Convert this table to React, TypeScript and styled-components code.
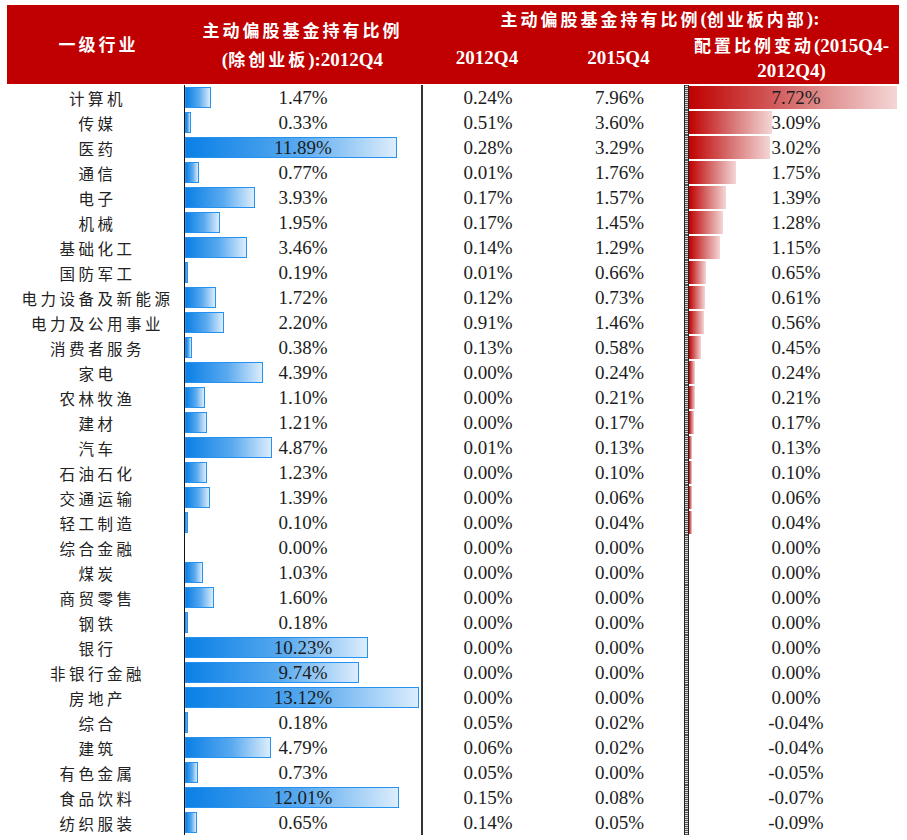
import styled, { createGlobalStyle } from "styled-components";

type Row = {
  name: string;
  base: number;
  q2012: number;
  q2015: number;
  change: number;
};

const rows: Row[] = [
  { name: "计算机", base: 1.47, q2012: 0.24, q2015: 7.96, change: 7.72 },
  { name: "传媒", base: 0.33, q2012: 0.51, q2015: 3.6, change: 3.09 },
  { name: "医药", base: 11.89, q2012: 0.28, q2015: 3.29, change: 3.02 },
  { name: "通信", base: 0.77, q2012: 0.01, q2015: 1.76, change: 1.75 },
  { name: "电子", base: 3.93, q2012: 0.17, q2015: 1.57, change: 1.39 },
  { name: "机械", base: 1.95, q2012: 0.17, q2015: 1.45, change: 1.28 },
  { name: "基础化工", base: 3.46, q2012: 0.14, q2015: 1.29, change: 1.15 },
  { name: "国防军工", base: 0.19, q2012: 0.01, q2015: 0.66, change: 0.65 },
  { name: "电力设备及新能源", base: 1.72, q2012: 0.12, q2015: 0.73, change: 0.61 },
  { name: "电力及公用事业", base: 2.2, q2012: 0.91, q2015: 1.46, change: 0.56 },
  { name: "消费者服务", base: 0.38, q2012: 0.13, q2015: 0.58, change: 0.45 },
  { name: "家电", base: 4.39, q2012: 0, q2015: 0.24, change: 0.24 },
  { name: "农林牧渔", base: 1.1, q2012: 0, q2015: 0.21, change: 0.21 },
  { name: "建材", base: 1.21, q2012: 0, q2015: 0.17, change: 0.17 },
  { name: "汽车", base: 4.87, q2012: 0.01, q2015: 0.13, change: 0.13 },
  { name: "石油石化", base: 1.23, q2012: 0, q2015: 0.1, change: 0.1 },
  { name: "交通运输", base: 1.39, q2012: 0, q2015: 0.06, change: 0.06 },
  { name: "轻工制造", base: 0.1, q2012: 0, q2015: 0.04, change: 0.04 },
  { name: "综合金融", base: 0, q2012: 0, q2015: 0, change: 0 },
  { name: "煤炭", base: 1.03, q2012: 0, q2015: 0, change: 0 },
  { name: "商贸零售", base: 1.6, q2012: 0, q2015: 0, change: 0 },
  { name: "钢铁", base: 0.18, q2012: 0, q2015: 0, change: 0 },
  { name: "银行", base: 10.23, q2012: 0, q2015: 0, change: 0 },
  { name: "非银行金融", base: 9.74, q2012: 0, q2015: 0, change: 0 },
  { name: "房地产", base: 13.12, q2012: 0, q2015: 0, change: 0 },
  { name: "综合", base: 0.18, q2012: 0.05, q2015: 0.02, change: -0.04 },
  { name: "建筑", base: 4.79, q2012: 0.06, q2015: 0.02, change: -0.04 },
  { name: "有色金属", base: 0.73, q2012: 0.05, q2015: 0, change: -0.05 },
  { name: "食品饮料", base: 12.01, q2012: 0.15, q2015: 0.08, change: -0.07 },
  { name: "纺织服装", base: 0.65, q2012: 0.14, q2015: 0.05, change: -0.09 },
];

// px per percentage point
const BLUE_SCALE = 17.85;
const RED_SCALE = 26.9;

const pct = (v: number) => `${v.toFixed(2)}%`;

const App = () => {
  return (
    <>
      <GlobalStyle />
      <Page>
        <Header>
          <HeadName>
            <Cjk>一级行业</Cjk>
          </HeadName>
          <HeadBase>
            <div>
              <Cjk>主动偏股基金持有比例</Cjk>
            </div>
            <div>
              (<Cjk>除创业板</Cjk>):2012Q4
            </div>
          </HeadBase>
          <HeadGroup>
            <Cjk>主动偏股基金持有比例</Cjk>(<Cjk>创业板内部</Cjk>):
          </HeadGroup>
          <HeadSub $col={3}>2012Q4</HeadSub>
          <HeadSub $col={4}>2015Q4</HeadSub>
          <HeadChange>
            <div>
              <Cjk>配置比例变动</Cjk>(2015Q4-
            </div>
            <div>2012Q4)</div>
          </HeadChange>
        </Header>
        <Body>
          {rows.map((r) => (
            <RowLine key={r.name}>
              <NameCell>{r.name}</NameCell>
              <BlueCell>
                {r.base > 0 && (
                  <BlueBar style={{ width: Math.max(3, r.base * BLUE_SCALE) }} />
                )}
                <CellText>{pct(r.base)}</CellText>
              </BlueCell>
              <ValueCell $lined>{pct(r.q2012)}</ValueCell>
              <ValueCell>{pct(r.q2015)}</ValueCell>
              <DoubleRule />
              <RedCell>
                {r.change > 0 && (
                  <RedBar style={{ width: Math.max(3, r.change * RED_SCALE) }} />
                )}
                <CellText>{pct(r.change)}</CellText>
              </RedCell>
            </RowLine>
          ))}
        </Body>
      </Page>
    </>
  );
};

export default App;

const GlobalStyle = createGlobalStyle`
  body {
    margin: 0;
    background: #ffffff;
  }
`;

const COLUMNS = "177px 237px 132px 131px 5px 210px";

const Page = styled.div`
  padding: 5px 0 0 7px;
  width: 892px;
`;

const Header = styled.div`
  display: grid;
  grid-template-columns: ${COLUMNS};
  grid-template-rows: 26px 53px;
  background: #c00000;
  color: #ffffff;
  font-family: "Liberation Serif", "Noto Sans CJK SC", serif;
  font-weight: bold;
  font-size: 19px;
`;

const Cjk = styled.span`
  font-family: "Noto Sans CJK SC", sans-serif;
  font-size: 17px;
  letter-spacing: 3px;
`;

const HeadName = styled.div`
  grid-column: 1;
  grid-row: 1 / 3;
  display: flex;
  align-items: center;
  justify-content: center;
  padding: 0 0 2px 6px;
`;

const HeadBase = styled.div`
  grid-column: 2;
  grid-row: 1 / 3;
  display: flex;
  flex-direction: column;
  justify-content: center;
  align-items: center;
  line-height: 28px;
  padding-top: 1px;
`;

const HeadGroup = styled.div`
  grid-column: 3 / 7;
  grid-row: 1;
  display: flex;
  align-items: flex-end;
  justify-content: center;
  line-height: 24px;
`;

const HeadSub = styled.div<{ $col: number }>`
  grid-column: ${({ $col }) => $col};
  grid-row: 2;
  display: flex;
  align-items: center;
  justify-content: center;
  padding-top: 1px;
`;

const HeadChange = styled.div`
  grid-column: 5 / 7;
  grid-row: 2;
  display: flex;
  flex-direction: column;
  justify-content: center;
  align-items: center;
  line-height: 25px;
`;

const Body = styled.div`
  display: flex;
  flex-direction: column;
  padding-top: 1px;
`;

const RowLine = styled.div`
  display: grid;
  grid-template-columns: ${COLUMNS};
  height: 25px;
  color: #1c1c1c;
  font-family: "Liberation Serif", serif;
  font-size: 19px;
`;

const NameCell = styled.div`
  display: flex;
  align-items: center;
  justify-content: center;
  padding-left: 4px;
  font-family: "Noto Sans CJK SC", sans-serif;
  font-size: 15.5px;
  letter-spacing: 3.5px;
  color: #222;
`;

const BlueCell = styled.div`
  position: relative;
  display: flex;
  align-items: center;
  justify-content: center;
  border-left: 1px solid #111;
`;

const RedCell = styled.div`
  position: relative;
  display: flex;
  align-items: center;
  justify-content: center;
  padding-left: 4px;
`;

const CellText = styled.span`
  position: relative;
  line-height: 25px;
`;

const BlueBar = styled.div`
  position: absolute;
  left: 0;
  top: 2px;
  height: 21px;
  box-sizing: border-box;
  border: 1px solid #2592f2;
  background: linear-gradient(to right, #0a80e6, #5aaaef 55%, #dcedfc);
`;

const RedBar = styled.div`
  position: absolute;
  left: 0;
  top: 1px;
  height: 23px;
  background: linear-gradient(to right, #c00000, #d97a7a 55%, #f4d6d6);
`;

const ValueCell = styled.div<{ $lined?: boolean }>`
  display: flex;
  align-items: center;
  justify-content: center;
  box-sizing: border-box;
  border-left: ${({ $lined }) => ($lined ? "2px solid #333" : "none")};
  padding-left: ${({ $lined }) => ($lined ? "0" : "2px")};
`;

const DoubleRule = styled.div`
  box-sizing: border-box;
  border-left: 1px solid #222;
  border-right: 1px solid #222;
  background: repeating-linear-gradient(
    to bottom,
    #555 0 1px,
    #ddd 1px 2px
  );
`;
